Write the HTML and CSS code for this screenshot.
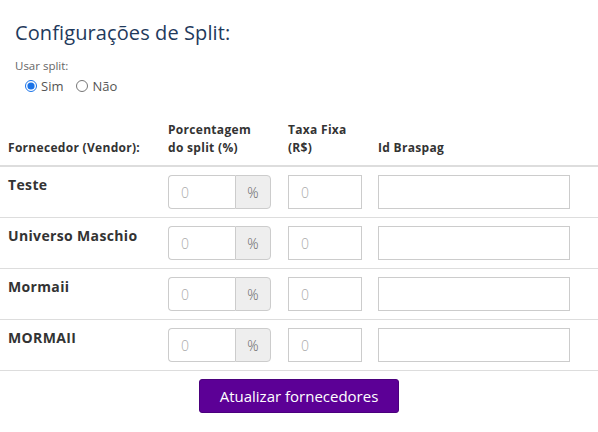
FILE: index.html
```html
<!DOCTYPE html>
<html lang="pt">
<head>
<meta charset="utf-8">
<link rel="stylesheet" href="styles.css">
</head>
<body>
<div class="page">
  <h3 class="title">Configurações de Split:</h3>
  <div class="usar">
    <div class="usar-label">Usar split:</div>
    <div class="radios">
      <label class="radio"><input type="radio" name="split" checked>Sim</label>
      <label class="radio"><input type="radio" name="split">Não</label>
    </div>
  </div>
  <table class="vendors">
    <colgroup>
      <col class="c1"><col class="c2"><col class="c3"><col class="c4"><col>
    </colgroup>
    <thead>
      <tr>
        <th>Fornecedor (Vendor):</th>
        <th>Porcentagem<br>do split (%)</th>
        <th>Taxa Fixa<br>(R$)</th>
        <th>Id Braspag</th>
        <th></th>
      </tr>
    </thead>
    <tbody>
      <tr>
        <td class="name">Teste</td>
        <td><div class="group"><input class="ctl g-in" placeholder="0"><span class="addon">%</span></div></td>
        <td><input class="ctl taxa" placeholder="0"></td>
        <td><input class="ctl idb"></td>
        <td></td>
      </tr>
      <tr>
        <td class="name">Universo Maschio</td>
        <td><div class="group"><input class="ctl g-in" placeholder="0"><span class="addon">%</span></div></td>
        <td><input class="ctl taxa" placeholder="0"></td>
        <td><input class="ctl idb"></td>
        <td></td>
      </tr>
      <tr>
        <td class="name">Mormaii</td>
        <td><div class="group"><input class="ctl g-in" placeholder="0"><span class="addon">%</span></div></td>
        <td><input class="ctl taxa" placeholder="0"></td>
        <td><input class="ctl idb"></td>
        <td></td>
      </tr>
      <tr>
        <td class="name">MORMAII</td>
        <td><div class="group"><input class="ctl g-in" placeholder="0"><span class="addon">%</span></div></td>
        <td><input class="ctl taxa" placeholder="0"></td>
        <td><input class="ctl idb"></td>
        <td></td>
      </tr>
    </tbody>
  </table>
  <div class="actions">
    <button class="btn" type="button">Atualizar fornecedores</button>
  </div>
</div>
</body>
</html>
```

FILE: styles.css
```css
* { box-sizing: border-box; }
body {
  margin: 0;
  font-family: "Open Sans", "Liberation Sans", sans-serif;
  color: #333;
  background: #fff;
}
.title {
  margin: 0;
  padding: 21px 15px 0;
  font-size: 20px;
  line-height: 24px;
  font-weight: 400;
  letter-spacing: 0.1px;
  color: #1f3a5c;
}
.usar {
  padding: 13px 15px 0;
}
.usar-label {
  font-size: 11.5px;
  line-height: 15px;
  color: #666;
}
.radios {
  display: flex;
  gap: 13px;
  padding-left: 10px;
  margin-top: 4px;
  font-size: 13px;
  line-height: 18px;
  color: #555;
}
.radio {
  display: flex;
  align-items: center;
}
.radio input {
  margin: 0 4px 0 0;
  width: 12px;
  height: 12px;
  accent-color: #1a73e8;
}
.vendors {
  width: 100%;
  border-collapse: collapse;
  margin-top: 18px;
}
.c1 { width: 160px; }
.c2 { width: 120px; }
.c3 { width: 90px; }
.c4 { width: 208px; }
.vendors th {
  text-align: left;
  vertical-align: bottom;
  padding: 8px;
  font-size: 12px;
  line-height: 18px;
  font-weight: 700;
  letter-spacing: 0.3px;
  color: #333;
  border-bottom: 2px solid #ddd;
}
.vendors td {
  padding: 8px;
  vertical-align: top;
  border-bottom: 1px solid #ddd;
}
.vendors td.name {
  font-size: 14px;
  line-height: 20px;
  font-weight: 700;
  letter-spacing: 0.35px;
  color: #333;
}
.ctl {
  height: 34px;
  border: 1px solid #ccc;
  padding: 6px 12px;
  font-family: inherit;
  font-size: 14px;
  font-weight: 300;
  color: #555;
  background: #fff;
  outline: none;
  display: block;
}
.ctl::placeholder { color: #aaa; }
.group {
  display: flex;
  width: 103px;
}
.g-in {
  width: 67px;
  border-radius: 4px 0 0 4px;
  border-right: 0;
}
.addon {
  width: 36px;
  height: 34px;
  border: 1px solid #ccc;
  border-radius: 0 4px 4px 0;
  background: #eee;
  color: #666;
  font-size: 14px;
  font-weight: 300;
  display: flex;
  align-items: center;
  justify-content: center;
}
.taxa { width: 74px; }
.idb { width: 192px; }
.actions {
  display: flex;
  justify-content: center;
  padding-top: 8px;
}
.btn {
  width: 200px;
  height: 34px;
  border: 1px solid #4b007d;
  border-radius: 3px;
  background: #5c0096;
  color: #fff;
  font-family: "Open Sans", sans-serif;
  font-size: 15px;
  font-weight: 400;
}
```
